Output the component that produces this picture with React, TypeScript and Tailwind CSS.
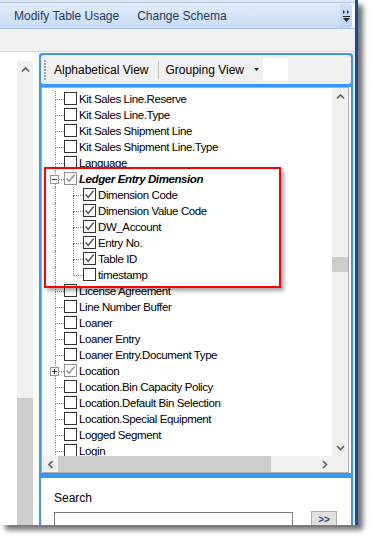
import React from "react";

type Row = {
  label: string;
  checked?: boolean;
  grey?: boolean;
  bold?: boolean;
  expander?: "+" | "-";
  child?: boolean;
  last?: boolean;
};

const rows: Row[] = [
  { label: "Kit Sales Line.Reserve" },
  { label: "Kit Sales Line.Type" },
  { label: "Kit Sales Shipment Line" },
  { label: "Kit Sales Shipment Line.Type" },
  { label: "Language" },
  { label: "Ledger Entry Dimension", checked: true, grey: true, bold: true, expander: "-" },
  { label: "Dimension Code", checked: true, child: true },
  { label: "Dimension Value Code", checked: true, child: true },
  { label: "DW_Account", checked: true, child: true },
  { label: "Entry No.", checked: true, child: true },
  { label: "Table ID", checked: true, child: true },
  { label: "timestamp", child: true, last: true },
  { label: "License Agreement" },
  { label: "Line Number Buffer" },
  { label: "Loaner" },
  { label: "Loaner Entry" },
  { label: "Loaner Entry.Document Type" },
  { label: "Location", checked: true, grey: true, expander: "+" },
  { label: "Location.Bin Capacity Policy" },
  { label: "Location.Default Bin Selection" },
  { label: "Location.Special Equipment" },
  { label: "Logged Segment" },
  { label: "Login" },
];

const Chevron = ({ dir }: { dir: "up" | "down" | "left" | "right" }) => {
  const d = {
    up: "M1 5.5 L4.5 2 L8 5.5",
    down: "M1 2 L4.5 5.5 L8 2",
    left: "M5.5 1 L2 4.5 L5.5 8",
    right: "M2 1 L5.5 4.5 L2 8",
  }[dir];
  const vert = dir === "up" || dir === "down";
  return (
    <svg width={vert ? 9 : 7} height={vert ? 7 : 9} viewBox={vert ? "0 0 9 7" : "0 0 7 9"}>
      <path d={d} fill="none" stroke="#606060" strokeWidth="1.7" />
    </svg>
  );
};

const CheckBox = ({ checked, grey }: { checked?: boolean; grey?: boolean }) => (
  <div
    className={`mt-px h-[13px] w-[13px] shrink-0 border bg-white ${grey ? "border-[#8e8e8e]" : "border-[#333333]"}`}
  >
    {checked && (
      <svg width="11" height="11" viewBox="0 0 11 11">
        <path d="M1.5 5.5 L4.2 8.3 L9.6 1.6" fill="none" stroke={grey ? "#8e8e8e" : "#4a4a4a"} strokeWidth="1.4" />
      </svg>
    )}
  </div>
);

const Expander = ({ kind }: { kind: "+" | "-" }) => (
  <svg width="9" height="9" viewBox="0 0 9 9" className="absolute left-[-5px] top-[4px]">
    <rect x="0.5" y="0.5" width="8" height="8" fill="#fff" stroke="#919191" />
    <path d="M2 4.5 H7" stroke="#333" />
    {kind === "+" && <path d="M4.5 2 V7" stroke="#333" />}
  </svg>
);

const dot = "border-dotted border-[#8a8a8a]";

const Connector = ({ width, last, expander }: { width: string; last?: boolean; expander?: "+" | "-" }) => (
  <div className={`relative flex shrink-0 flex-col ${width}`}>
    <div className={`h-[9px] border-b border-l ${dot}`} />
    <div className={`flex-1 ${last ? "" : `border-l ${dot}`}`} />
    {expander && <Expander kind={expander} />}
  </div>
);

const TreeRow = ({ row }: { row: Row }) => (
  <div className="flex h-4 shrink-0 items-stretch">
    <div className="w-[13px] shrink-0" />
    {row.child ? (
      <>
        <div className={`w-[18px] shrink-0 border-l ${dot}`} />
        <Connector width="w-[10px]" last={row.last} />
      </>
    ) : (
      <Connector width="w-[9px]" expander={row.expander} />
    )}
    <CheckBox checked={row.checked} grey={row.grey} />
    <span
      className={`ml-[2px] whitespace-nowrap text-[11.5px] leading-4 tracking-[-0.4px] text-black ${row.bold ? "font-bold italic" : ""}`}
    >
      {row.label}
    </span>
  </div>
);

export default function App() {
  return (
    <div className="relative min-h-[540px] w-[373px] bg-white font-['Liberation_Sans',Arial,sans-serif]">
      <div className="flex h-[525px] w-[358px] overflow-hidden shadow-[5px_5px_5px_rgba(0,0,0,0.55)]">
        <div className="flex w-[355px] flex-col bg-[#f0f0f0]">
          {/* top strip */}
          <div className="h-[3px] shrink-0 border-b border-[#b6cbe6] bg-[#e2e9f3]" />
          {/* ribbon toolbar */}
          <div className="flex h-[26px] shrink-0 border-b border-[#a9c1df] bg-white">
            <div className="flex flex-1 items-center rounded-r-[3px] bg-linear-to-b from-[#e1ecfa] to-[#c8dbf4] pl-[14px] pt-px text-[12px] text-[#1e395b]">
              <span>Modify Table Usage</span>
              <span className="ml-[18px]">Change Schema</span>
              <div className="ml-auto flex h-full w-[12px] flex-col items-center justify-between rounded-r-[3px] bg-linear-to-b from-[#cfe0f6] to-[#bcd3f1] py-[6px]">
                <svg width="7" height="4" viewBox="0 0 7 4">
                  <path d="M0 0 L2 2 L0 4 Z M4 0 L6 2 L4 4 Z" fill="#2a2a2a" />
                </svg>
                <svg width="7" height="6" viewBox="0 0 7 6">
                  <path d="M0 0.5 H7" stroke="#2a2a2a" />
                  <path d="M0 2 H7 L3.5 6 Z" fill="#2a2a2a" />
                </svg>
              </div>
            </div>
            <div className="w-[3px]" />
          </div>
          {/* grey area */}
          <div className="h-[23px] shrink-0 border-b border-[#d7d7d7] bg-[#f0f0f0]" />
          {/* body */}
          <div className="flex min-h-0 flex-1 overflow-hidden bg-white">
            <div className="w-[17px] shrink-0" />
            <div className="mt-[9px] flex w-[16px] shrink-0 flex-col bg-[#f0f0f0]">
              <div className="flex h-[17px] items-center justify-center">
                <Chevron dir="up" />
              </div>
              <div className="flex-1" />
              <div className="h-[127px] bg-[#cdcdcd]" />
            </div>
            <div className="w-[6px] shrink-0" />
            {/* main panel */}
            <div className="mt-px flex w-[314px] shrink-0 flex-col rounded-t-[3px] border-x-2 border-t-2 border-[#3a97f5] bg-white">
              <div className="shrink-0 bg-[#3a97f5]">
                <div className="flex h-[29px] items-center rounded-[3px] bg-[#f0f0f0] text-[12px] text-black">
                  <div className="ml-[3px] flex h-[20px] w-[2px] flex-col justify-between">
                    {Array.from({ length: 7 }).map((_, i) => (
                      <div key={i} className="h-[2px] w-[2px] bg-[#a0a0a0]" />
                    ))}
                  </div>
                  <span className="ml-[8px]">Alphabetical View</span>
                  <div className="ml-[9px] h-[18px] w-px bg-[#c5c5c5]" />
                  <span className="ml-[7px]">Grouping View</span>
                  <svg width="5" height="3" viewBox="0 0 5 3" className="ml-[10px]">
                    <path d="M0 0 H5 L2.5 3 Z" fill="#222" />
                  </svg>
                  <div className="ml-[4px] h-[23px] w-[25px] bg-white" />
                </div>
              </div>
              <div className="h-[3px] shrink-0 bg-[#3a97f5]" />
              {/* tree list */}
              <div className="mr-[2px] flex shrink-0 flex-col border border-[#adadad] bg-white">
                <div className="flex h-[368px]">
                  <div className="flex flex-1 flex-col overflow-hidden pt-[3px]">
                    {rows.map((r) => (
                      <TreeRow key={r.label} row={r} />
                    ))}
                  </div>
                  <div className="flex w-[16px] flex-col bg-[#f0f0f0]">
                    <div className="flex h-[17px] items-center justify-center">
                      <Chevron dir="up" />
                    </div>
                    <div className="h-[152px]" />
                    <div className="h-[15px] bg-[#cdcdcd]" />
                    <div className="flex-1" />
                    <div className="flex h-[17px] items-center justify-center">
                      <Chevron dir="down" />
                    </div>
                  </div>
                </div>
                <div className="flex h-[16px] bg-[#f0f0f0]">
                  <div className="flex w-[16px] items-center justify-center">
                    <Chevron dir="left" />
                  </div>
                  <div className="w-[213px] bg-[#cdcdcd]" />
                  <div className="flex-1" />
                  <div className="flex w-[16px] items-center justify-center">
                    <Chevron dir="right" />
                  </div>
                  <div className="w-[16px]" />
                </div>
              </div>
              <div className="h-[5px] shrink-0 bg-[#3a97f5]" />
              {/* search */}
              <div className="min-h-0 flex-1 overflow-hidden bg-white pl-[13px] pt-[12px] text-[12px] text-black">
                <div className="leading-4">Search</div>
                <div className="mt-[6px] flex items-start">
                  <div className="h-[20px] w-[239px] border border-[#7a7a7a] bg-white" />
                  <div className="ml-[18px] -mt-px flex h-[22px] w-[26px] justify-center border border-[#adadad] bg-[#e1e1e1] text-[10px] font-bold leading-4 text-[#2b4a7a]">
                    &gt;&gt;
                  </div>
                </div>
              </div>
            </div>
            <div className="flex-1 bg-[#e8e8e8]" />
          </div>
        </div>
        <div className="w-[3px] bg-[#1b479e]" />
      </div>
      {/* annotation highlight */}
      <div className="absolute left-[44px] top-[167px] h-[121px] w-[237px] border-2 border-[#ff0000] shadow-[3px_3px_4px_rgba(0,0,0,0.35)]" />
    </div>
  );
}
